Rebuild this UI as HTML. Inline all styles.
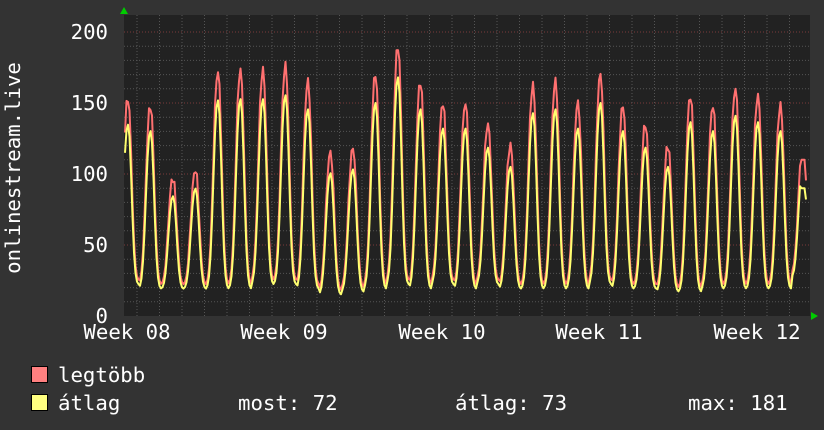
<!DOCTYPE html>
<html><head><meta charset="utf-8"><style>
body{margin:0;background:#333;width:824px;height:430px;overflow:hidden}
svg{display:block}
text{font-family:"DejaVu Sans Mono","Liberation Mono",monospace;fill:#fff;font-size:20.7px}
</style></head><body>
<svg id="s" width="824" height="430" xmlns="http://www.w3.org/2000/svg">
<rect x="0" y="0" width="824" height="430" fill="#333"/>
<rect x="124" y="15" width="686" height="301" fill="#222"/>
<g id="grid"></g>
<path id="mx" fill="none" stroke="#ff7070" stroke-width="2" stroke-linejoin="round"/>
<path id="av" fill="none" stroke="#ffff70" stroke-width="2" stroke-linejoin="round"/>
<polygon points="120,14 128,14 124,7" fill="#0c0"/>
<polygon points="811,312 811,320 818,316" fill="#0c0"/>
<text x="108" y="39" text-anchor="end">200</text>
<text x="108" y="110" text-anchor="end">150</text>
<text x="108" y="181" text-anchor="end">100</text>
<text x="108" y="252" text-anchor="end">50</text>
<text x="108" y="323" text-anchor="end">0</text>
<text x="127" y="339" text-anchor="middle">Week 08</text>
<text x="284" y="339" text-anchor="middle">Week 09</text>
<text x="442" y="339" text-anchor="middle">Week 10</text>
<text x="599" y="339" text-anchor="middle">Week 11</text>
<text x="757" y="339" text-anchor="middle">Week 12</text>
<text transform="translate(20,168) rotate(-90)" text-anchor="middle">onlinestream.live</text>
<rect x="31.5" y="366.5" width="16" height="16" fill="#ff8080" stroke="#000"/>
<rect x="31.5" y="394.5" width="16" height="16" fill="#ffff80" stroke="#000"/>
<text x="58" y="382">legtöbb</text>
<text x="58" y="410">átlag</text>
<text x="238" y="410">most: 72</text>
<text x="455" y="410">átlag: 73</text>
<text x="688" y="410">max: 181</text>
</svg>
<script>
var g=document.getElementById('grid'),h='';
for(var v=10;v<=200;v+=10){var y=316-v*1.42;var red=v%50==0;h+='<line x1="124" x2="810" y1="'+y+'" y2="'+y+'" stroke="'+(red?'#7a3a3a':'#555')+'" stroke-dasharray="1,2"/>';}
for(var x=137;x<810;x+=22.5){var red=Math.abs(((x-205)%157.5+157.5)%157.5)<1;h+='<line y1="15" y2="316" x1="'+x+'" x2="'+x+'" stroke="'+(red?'#7a3a3a':'#555')+'" stroke-dasharray="1,2"/>';}
g.innerHTML=h;
var pk=[153,148,97,103,172,173,173,176,165,115,118,170,190,165,150,150,135,120,162,165,150,170,148,135,120,155,148,160,155,148,120];
var tr=[25,22,22,22,22,22,25,25,22,18,20,22,25,22,25,22,25,22,22,22,22,25,22,22,20,20,22,22,22,22,30];
var dm='',da='';
for(var x=125;x<=807;x+=1.5){
 var t=(x-128)/22.5; var i=Math.round(t); var ph=t-i;
 if(i<0)i=0;if(i>30)i=30;
 var f=Math.exp(-Math.pow(Math.abs(ph)/0.27,2.4)); if(ph>0)f=Math.exp(-Math.pow(ph/0.22,2.2));
 var n=Math.sin(x*1.7)*3;
 var vm=tr[i]+(pk[i]-tr[i])*f+n*f;
 var va=(tr[i]-3)+(pk[i]*0.9-tr[i])*Math.pow(f,1.05);
 if(x>800){vm=Math.min(vm,110);va=Math.min(va,90);}
 if(x>806){va=72;}
 dm+=(dm?'L':'M')+x.toFixed(1)+' '+(316-vm*1.42).toFixed(1);
 da+=(da?'L':'M')+x.toFixed(1)+' '+(316-va*1.42).toFixed(1);
}
document.getElementById('mx').setAttribute('d',dm);
document.getElementById('av').setAttribute('d',da);
</script>
</body></html>
